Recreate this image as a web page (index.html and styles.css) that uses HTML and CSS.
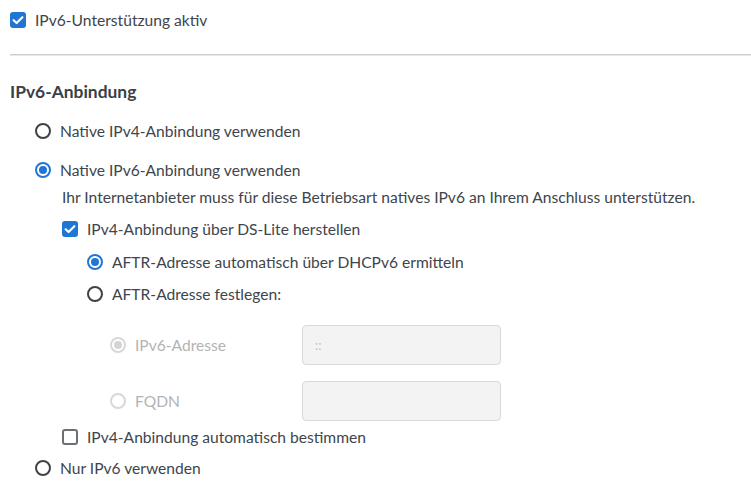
FILE: index.html
```html
<!DOCTYPE html>
<html lang="de">
<head>
<meta charset="utf-8">
<link rel="stylesheet" href="styles.css">
</head>
<body>
<div class="page">
  <div class="row top">
    <span class="cb checked"><svg viewBox="0 0 16 16" width="16" height="16"><path d="M3.6 8.2 L6.6 11.1 L12.4 5.2" fill="none" stroke="#fff" stroke-width="2.1" stroke-linecap="round" stroke-linejoin="round"/></svg></span>
    <span class="label">IPv6-Unterstützung aktiv</span>
  </div>
  <div class="divider"></div>
  <h2 class="heading">IPv6-Anbindung</h2>
  <div class="group l1">
    <div class="row r-a"><span class="rb"></span><span class="label">Native IPv4-Anbindung verwenden</span></div>
    <div class="row r-b"><span class="rb on"></span><span class="label">Native IPv6-Anbindung verwenden</span></div>
    <div class="l2">
      <p class="desc">Ihr Internetanbieter muss für diese Betriebsart natives IPv6 an Ihrem Anschluss unterstützen.</p>
      <div class="row r-c">
        <span class="cb checked"><svg viewBox="0 0 16 16" width="16" height="16"><path d="M3.6 8.2 L6.6 11.1 L12.4 5.2" fill="none" stroke="#fff" stroke-width="2.1" stroke-linecap="round" stroke-linejoin="round"/></svg></span>
        <span class="label">IPv4-Anbindung über DS-Lite herstellen</span>
      </div>
      <div class="l3">
        <div class="row r-d"><span class="rb on"></span><span class="label">AFTR-Adresse automatisch über DHCPv6 ermitteln</span></div>
        <div class="row r-e"><span class="rb"></span><span class="label">AFTR-Adresse festlegen:</span></div>
        <div class="l4">
          <div class="row field r-f">
            <div class="fl"><span class="rb dis on"></span><span class="label dis">IPv6-Adresse</span></div>
            <div class="input">::</div>
          </div>
          <div class="row field r-g">
            <div class="fl"><span class="rb dis"></span><span class="label dis">FQDN</span></div>
            <div class="input"></div>
          </div>
        </div>
      </div>
      <div class="row r-h"><span class="cb"></span><span class="label">IPv4-Anbindung automatisch bestimmen</span></div>
    </div>
    <div class="row r-i"><span class="rb"></span><span class="label">Nur IPv6 verwenden</span></div>
  </div>
</div>
</body>
</html>
```
FILE: styles.css
```css
html, body {
  margin: 0;
  padding: 0;
  background: #fff;
}
body {
  font-family: "Source Sans Pro", Lato, "Noto Sans", sans-serif;
  font-size: 15.6px;
  color: #3e454c;
}
.page {
  padding-left: 10px;
  width: 741px;
}
.row {
  display: flex;
  align-items: center;
  height: 30px;
}
.label {
  margin-left: 9px;
  white-space: nowrap;
  line-height: 20px;
}
.top { height: 40px; }
.divider {
  margin-top: 14px;
  height: 1px;
  border-top: 1px solid #cfcfcf;
  background: #e8e8e8;
}
.heading {
  margin: 24px 0 0 0;
  font-size: 17.4px;
  font-weight: 700;
  line-height: 24px;
  height: 24px;
  color: #3a4047;
}
.l1 { padding-left: 25px; }
.l2 { padding-left: 27px; }
.l3 { padding-left: 25px; }
.l4 { padding-left: 23px; }
.r-a { margin-top: 12px; }
.r-b { margin-top: 9px; }
.desc {
  margin: 2px 0 0 0;
  line-height: 20px;
  white-space: nowrap;
}
.r-c { margin-top: 7px; }
.r-d { margin-top: 3px; }
.r-e { margin-top: 2px; }
.field {
  height: 40px;
  margin-top: 16px;
}
.fl {
  display: flex;
  align-items: center;
  width: 192px;
}
.input {
  box-sizing: border-box;
  width: 199px;
  height: 40px;
  border: 1px solid #d8d8d8;
  border-radius: 4px;
  background: #f3f3f3;
  color: #c4c4c4;
  font-size: 13px;
  line-height: 38px;
  padding-left: 12px;
}
.r-h { margin-top: 1px; }
.r-i { margin-top: 1px; }

.cb {
  box-sizing: border-box;
  flex: none;
  width: 16px;
  height: 16px;
  border: 2px solid #6b7075;
  border-radius: 3px;
  display: flex;
}
.cb.checked {
  border: none;
  background: #1f77d3;
}
.rb {
  box-sizing: border-box;
  flex: none;
  width: 16px;
  height: 16px;
  border: 2px solid #3d4247;
  border-radius: 50%;
  display: flex;
  align-items: center;
  justify-content: center;
}
.rb.on { border-color: #1f77d3; }
.rb.on::after {
  content: "";
  width: 8px;
  height: 8px;
  border-radius: 50%;
  background: #1f77d3;
}
.rb.dis { border-color: #d8d8d8; }
.rb.dis.on::after { background: #d4d4d4; }
.label.dis { color: #b3b3b3; }
```
